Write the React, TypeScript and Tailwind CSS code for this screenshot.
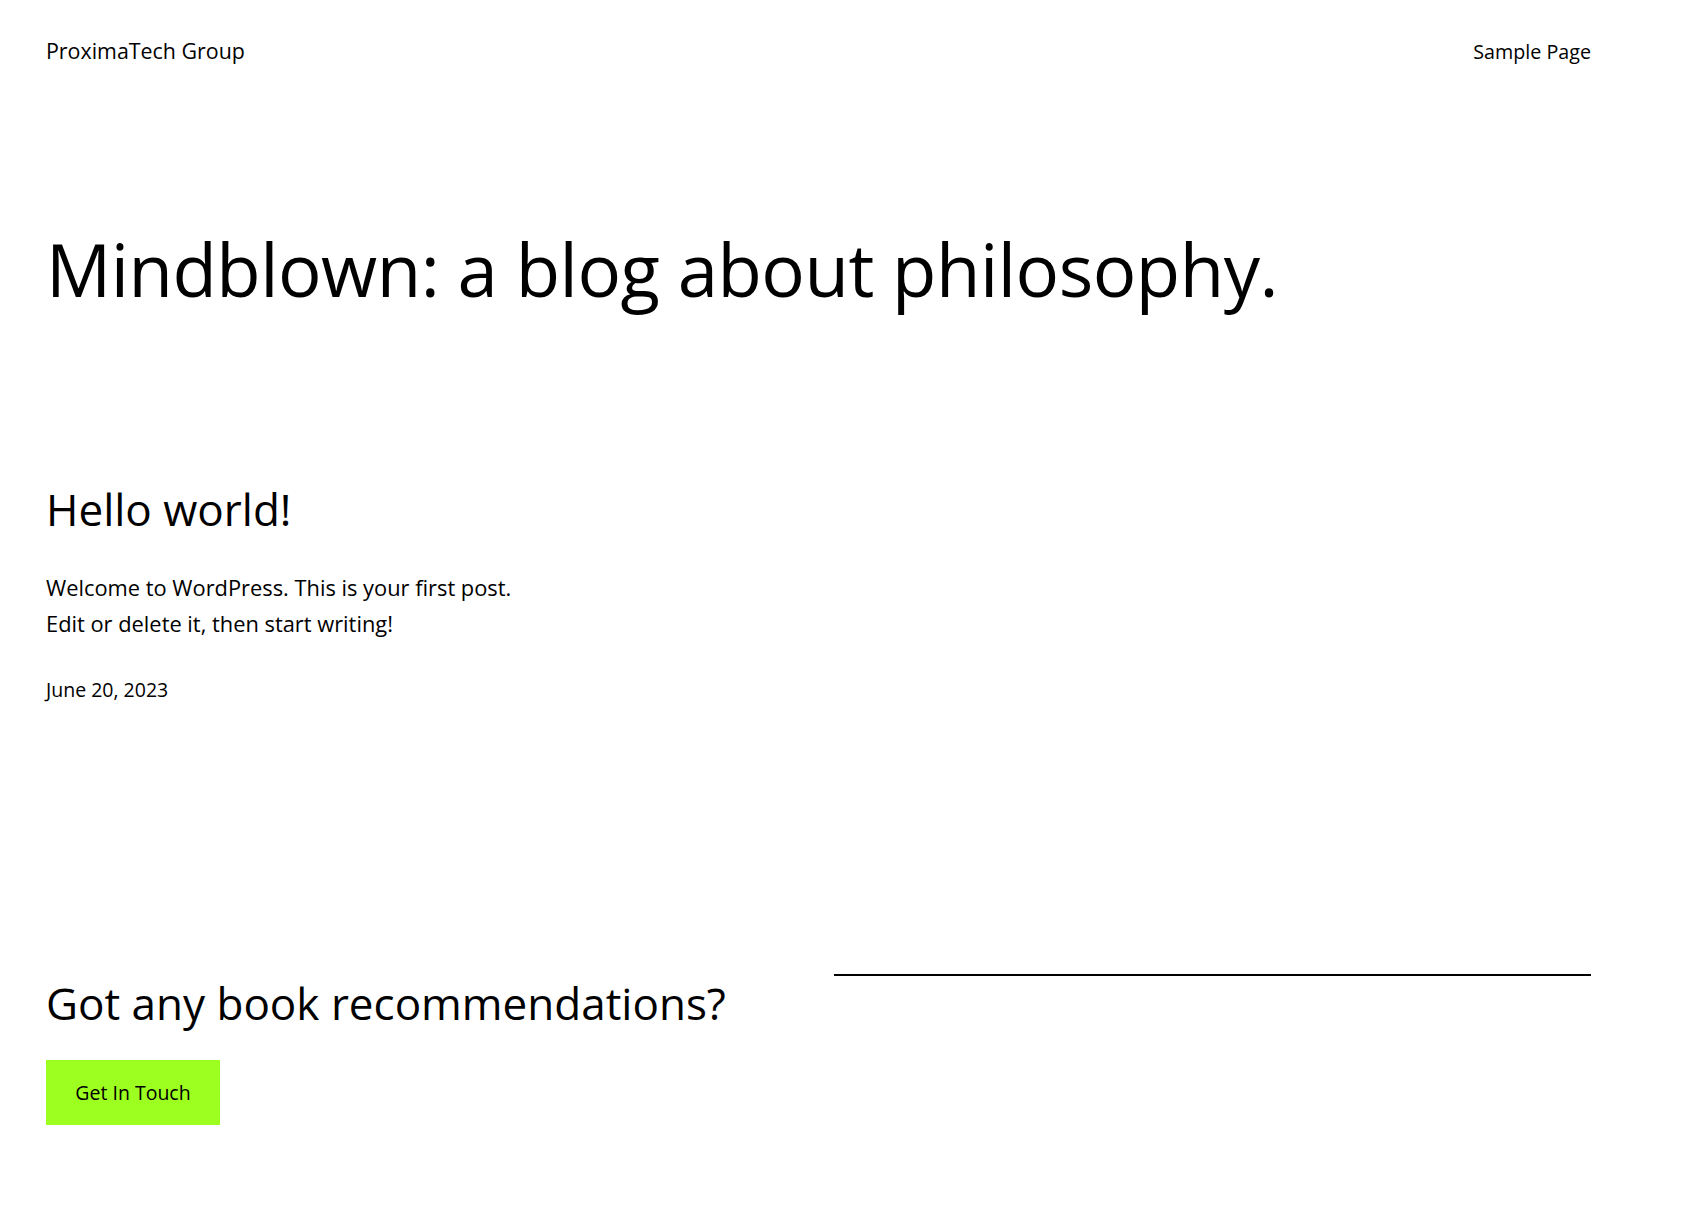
export default function App() {
  return (
    <div
      className="min-h-[1231px] bg-white text-black pl-[46px] pr-[91px]"
      style={{ fontFamily: '"Open Sans", "Noto Sans", sans-serif' }}
    >
      <header className="flex items-center justify-between h-[103px]">
        <a className="text-[21.4px]">ProximaTech Group</a>
        <nav>
          <a className="text-[19.7px]">Sample Page</a>
        </nav>
      </header>

      <main>
        <h1 className="mt-[123px] text-[72.5px] leading-[1.2] tracking-[-0.5px]">
          Mindblown: a blog about philosophy.
        </h1>

        <article className="mt-[170px]">
          <h2 className="text-[44px] leading-[1.2]">Hello world!</h2>
          <div className="mt-[34px] text-[21.85px] leading-[36.5px]">
            <p>Welcome to WordPress. This is your first post.</p>
            <p>Edit or delete it, then start writing!</p>
          </div>
          <div className="mt-[32px] text-[19.5px]">June 20, 2023</div>
        </article>
      </main>

      <section className="mt-[273px] flex gap-[30px]">
        <div className="flex-1">
          <h2 className="text-[44px] leading-[1.2]">Got any book recommendations?</h2>
          <a className="mt-[30px] inline-flex items-center justify-center w-[174px] h-[65px] bg-[#9dff20] text-[19.5px]">
            Get In Touch
          </a>
        </div>
        <div className="flex-1 -mt-[3px]">
          <hr className="border-0 border-t-2 border-black" />
        </div>
      </section>
    </div>
  );
}
